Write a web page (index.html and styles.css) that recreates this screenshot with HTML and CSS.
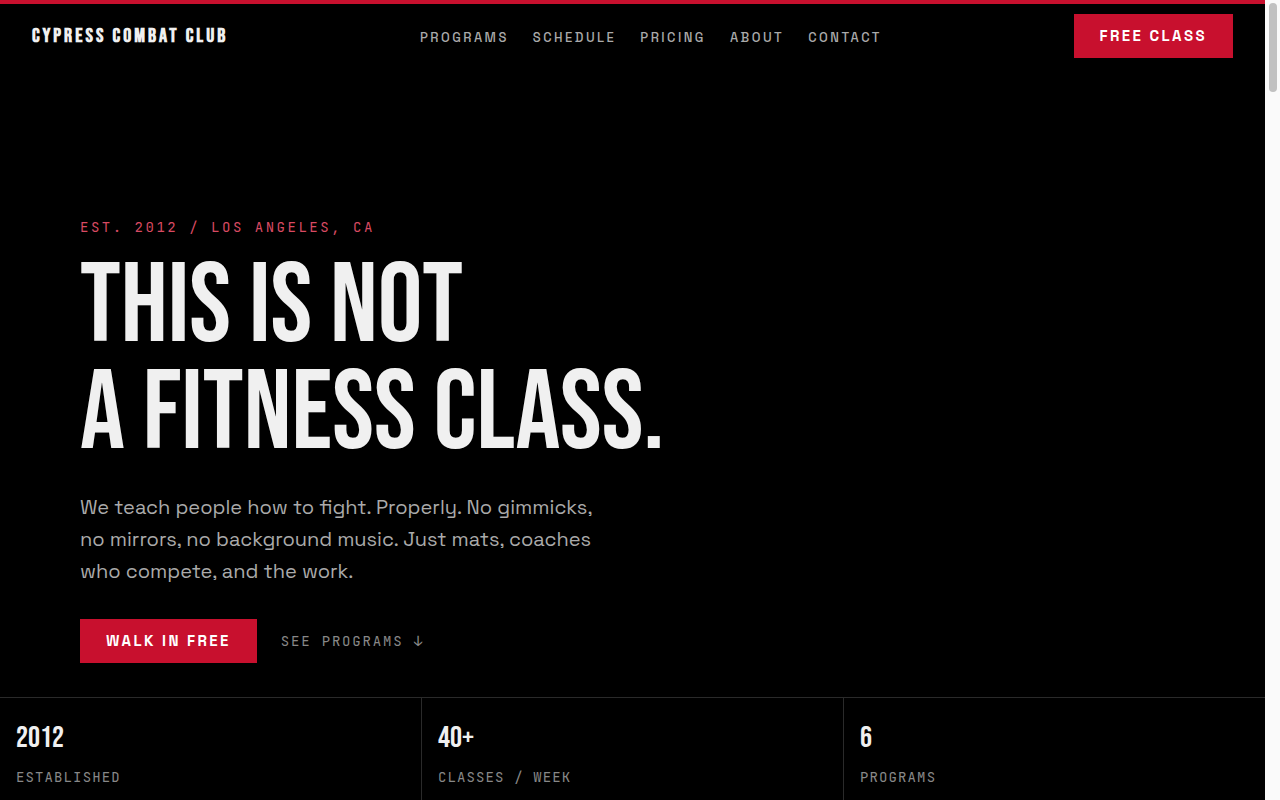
FILE: index.html
```html
<!DOCTYPE html>
<html lang="en">
<head>
<meta charset="utf-8">
<meta name="viewport" content="width=device-width, initial-scale=1">
<title>Cypress Combat Club</title>
<link rel="stylesheet" href="styles.css">
</head>
<body>
<div class="page">
  <header class="site-header">
    <a class="logo" href="#top">CYPRESS COMBAT CLUB</a>
    <nav class="nav" aria-label="Main">
      <a href="#programs">PROGRAMS</a>
      <a href="#schedule">SCHEDULE</a>
      <a href="#pricing">PRICING</a>
      <a href="#about">ABOUT</a>
      <a href="#contact">CONTACT</a>
    </nav>
    <a class="button" href="#free">FREE CLASS</a>
  </header>
  <main class="hero" id="top">
    <p class="eyebrow">EST. 2012 / LOS ANGELES, CA</p>
    <h1 class="title">THIS IS NOT<br>A FITNESS CLASS.</h1>
    <p class="lead">We teach people how to fight. Properly. No gimmicks, no mirrors, no background music. Just mats, coaches who compete, and the work.</p>
    <div class="actions">
      <a class="button" href="#free">WALK IN FREE</a>
      <a class="text-link" href="#programs">SEE PROGRAMS ↓</a>
    </div>
  </main>
  <section class="stats" aria-label="Club facts">
    <div class="stat"><strong>2012</strong><span>ESTABLISHED</span></div>
    <div class="stat"><strong>40+</strong><span>CLASSES / WEEK</span></div>
    <div class="stat"><strong>6</strong><span>PROGRAMS</span></div>
  </section>
</div>
<div class="scroll-track" aria-hidden="true"><div class="scroll-thumb"></div></div>
</body>
</html>
```
FILE: styles.css
```css
:root {
  --red: #c8102e;
  --white: #f0f0f0;
  --grey: #aaaaaa;
  --dim: #888888;
  --line: #2a2a2a;
  --display: "Bebas Neue", "Liberation Sans Narrow", "Roboto Condensed", "Liberation Sans", sans-serif;
  --body: "Space Grotesk", Inter, sans-serif;
  --mono: "JetBrains Mono", "Liberation Mono", monospace;
}

* { box-sizing: border-box; }

body {
  margin: 0;
  display: flex;
  min-height: 100vh;
  background: #000;
  color: var(--white);
  font-family: var(--body);
}

a { color: inherit; text-decoration: none; }

.page {
  flex: 1;
  display: flex;
  flex-direction: column;
  border-top: 4px solid var(--red);
}

.site-header {
  display: flex;
  align-items: center;
  justify-content: space-between;
  padding: 10px 32px;
}

.logo {
  font-family: var(--display);
  font-size: 20px;
  font-weight: 700;
  line-height: 28px;
  letter-spacing: 3px;
}

.nav {
  display: flex;
  gap: 24px;
  padding-top: 2px;
  color: var(--grey);
  font-size: 13px;
  font-weight: 500;
  letter-spacing: 0.19em;
}

.button {
  padding: 12px 26px;
  background: var(--red);
  color: #fff;
  font-size: 15px;
  font-weight: 700;
  line-height: 20px;
  letter-spacing: 0.16em;
}

.hero {
  flex: 1;
  display: flex;
  flex-direction: column;
  justify-content: flex-end;
  padding: 80px 80px 34px;
}

.eyebrow {
  margin: 0 0 17px;
  color: #d84a62;
  font-family: var(--mono);
  font-size: 14px;
  line-height: 20px;
  letter-spacing: 0.18em;
}

.title {
  margin: 0 0 23px;
  font-family: var(--display);
  font-size: 112px;
  font-weight: 400;
  line-height: 107px;
}

.lead {
  max-width: 540px;
  margin: 0 0 32px;
  color: var(--grey);
  font-size: 20px;
  font-weight: 400;
  line-height: 32px;
}

.actions {
  display: flex;
  align-items: center;
  gap: 24px;
}

.text-link {
  color: var(--dim);
  font-family: var(--mono);
  font-size: 14px;
  letter-spacing: 0.13em;
}

.stats {
  display: grid;
  grid-template-columns: repeat(3, 1fr);
  gap: 1px;
  border-top: 1px solid var(--line);
  background: var(--line);
}

.stat {
  display: flex;
  flex-direction: column;
  gap: 12px;
  padding: 23px 16px 13px;
  background: #000;
}

.stat strong {
  font-family: var(--display);
  font-size: 30px;
  font-weight: 400;
  line-height: 34px;
}

.stat span {
  color: var(--dim);
  font-family: var(--mono);
  font-size: 14px;
  line-height: 20px;
  letter-spacing: 0.08em;
}

.scroll-track {
  width: 15px;
  padding: 3px 3px 3px 4px;
  background: #fafafa;
}

.scroll-thumb {
  height: 89px;
  border-radius: 4px;
  background: #c1c1c1;
}
```
